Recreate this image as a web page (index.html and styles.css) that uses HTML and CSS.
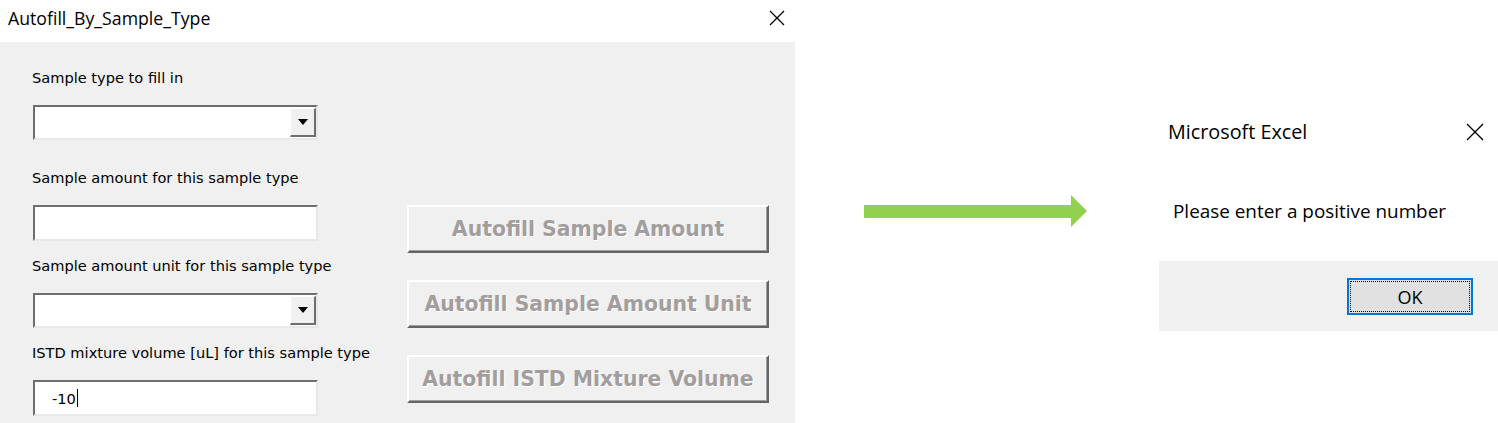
FILE: index.html
```html
<!DOCTYPE html>
<html>
<head>
<meta charset="utf-8">
<link rel="stylesheet" href="styles.css">
</head>
<body>
<div class="page">
  <div class="userform">
    <div class="uf-title">
      <span class="uf-title-text">Autofill_By_Sample_Type</span>
      <svg class="close-x" width="16" height="16" viewBox="0 0 16 16"><path d="M1 1L15 15M15 1L1 15" stroke="#000" stroke-width="1.3" fill="none"/></svg>
    </div>
    <div class="uf-body">
      <div class="fields">
        <div class="label l1">Sample type to fill in</div>
        <div class="field combo">
          <div class="combo-btn"><svg width="10" height="6" viewBox="0 0 10 6"><path d="M0 0H10L5 6Z" fill="#000"/></svg></div>
        </div>
        <div class="label l2">Sample amount for this sample type</div>
        <div class="field textbox"></div>
        <div class="label">Sample amount unit for this sample type</div>
        <div class="field combo">
          <div class="combo-btn"><svg width="10" height="6" viewBox="0 0 10 6"><path d="M0 0H10L5 6Z" fill="#000"/></svg></div>
        </div>
        <div class="label">ISTD mixture volume [uL] for this sample type</div>
        <div class="field textbox"><span class="value">-10</span><span class="caret"></span></div>
      </div>
      <div class="buttons">
        <div class="btn">Autofill Sample Amount</div>
        <div class="btn">Autofill Sample Amount Unit</div>
        <div class="btn">Autofill ISTD Mixture Volume</div>
      </div>
    </div>
  </div>
  <div class="arrow-wrap">
    <svg class="arrow" width="224" height="33" viewBox="0 0 224 33"><path d="M0 10H207V0L223 16L207 32V23H0Z" fill="#92d050"/></svg>
  </div>
  <div class="msgbox">
    <div class="mb-title">
      <span class="mb-title-text">Microsoft Excel</span>
      <svg class="close-x2" width="18" height="18" viewBox="0 0 18 18"><path d="M1 1L17 17M17 1L1 17" stroke="#000" stroke-width="1.3" fill="none"/></svg>
    </div>
    <div class="mb-msg">Please enter a positive number</div>
    <div class="mb-footer">
      <div class="ok"><div class="ok-focus">OK</div></div>
    </div>
  </div>
</div>
</body>
</html>
```
FILE: styles.css
```css
html, body { margin: 0; padding: 0; background: #fff; }
.page { display: flex; width: 1498px; height: 423px; overflow: hidden; }

.userform { width: 795px; height: 423px; display: flex; flex-direction: column; flex: none; overflow: hidden; }
.uf-title { flex: none; height: 42px; background: #fff; display: flex; align-items: center; justify-content: space-between; padding: 0 10px 6px 8px; box-sizing: border-box; }
.uf-title-text { font-family: "Open Sans", "Noto Sans", sans-serif; font-size: 17.7px; line-height: 22px; color: #000; }
.uf-body { flex: 1 0 auto; background: #f0f0f0; display: flex; padding: 28px 0 0 32px; box-sizing: border-box; }

.fields { width: 286px; display: flex; flex-direction: column; flex: none; }
.label { font-family: "DejaVu Sans", "Liberation Sans", sans-serif; font-size: 14.6px; line-height: 16px; height: 16px; color: #000; margin-top: 17px; white-space: nowrap; }
.label.l1 { margin-top: 0; }
.label.l2 { margin-top: 30px; }
.field { flex: none; margin-top: 19px; margin-left: 1px; background: #fff; box-sizing: border-box; border-top: 2px solid #6e6e6e; border-left: 2px solid #6e6e6e; border-bottom: 2px solid #e8e8e8; border-right: 2px solid #e8e8e8; position: relative; }
.combo { height: 35px; width: 285px; }
.textbox { height: 36px; width: 285px; display: flex; align-items: center; padding-left: 17px; font-family: "DejaVu Sans", sans-serif; font-size: 14.6px; }
.combo-btn { position: absolute; right: 0; top: 1px; bottom: 1px; width: 26px; background: #f0f0f0; box-sizing: border-box; border-top: 1px solid #fff; border-left: 1px solid #fff; border-bottom: 2px solid #6e6e6e; border-right: 2px solid #6e6e6e; display: flex; align-items: center; justify-content: center; }
.caret { display: inline-block; width: 1px; height: 18px; background: #000; margin-left: 1px; }

.buttons { margin-left: 89px; padding-top: 135px; display: flex; flex-direction: column; gap: 27px; }
.btn { width: 362px; height: 48px; box-sizing: border-box; background: #f0f0f0; border-top: 2px solid #fff; border-left: 2px solid #fff; border-bottom: 2px solid #646464; border-right: 2px solid #646464; box-shadow: inset -1px -1px 0 #a0a0a0; display: flex; align-items: center; justify-content: center; font-family: "DejaVu Sans", "Liberation Sans", sans-serif; font-weight: bold; font-size: 20.4px; color: #a39e9e; text-shadow: 1px 1px 0 #fff; white-space: nowrap; }

.arrow-wrap { width: 364px; flex: none; }
.arrow { display: block; margin: 195px 0 0 69px; }

.msgbox { width: 339px; flex: none; display: flex; flex-direction: column; background: #fff; }
.mb-title { flex: none; display: flex; justify-content: space-between; align-items: center; margin-top: 121px; padding: 0 14px 0 9px; height: 22px; }
.mb-title-text { font-family: "Open Sans", "Noto Sans", sans-serif; font-size: 19.8px; line-height: 22px; color: #000; }
.mb-msg { flex: none; font-family: "Open Sans", "Noto Sans", sans-serif; font-size: 18.9px; color: #000; margin: 57px 0 0 14px; line-height: 22px; height: 22px; white-space: nowrap; }
.mb-footer { flex: none; margin-top: 39px; height: 70px; background: #f0f0f0; display: flex; justify-content: flex-end; align-items: flex-start; padding: 17px 25px 0 0; box-sizing: border-box; }
.ok { width: 126px; height: 37px; box-sizing: border-box; border: 2px solid #0078d7; background: #e1e1e1; padding: 1px; }
.ok-focus { height: 100%; box-sizing: border-box; border: 1px dotted #000; display: flex; align-items: center; justify-content: center; font-family: "Open Sans", "Noto Sans", sans-serif; font-size: 18px; color: #000; }
```
